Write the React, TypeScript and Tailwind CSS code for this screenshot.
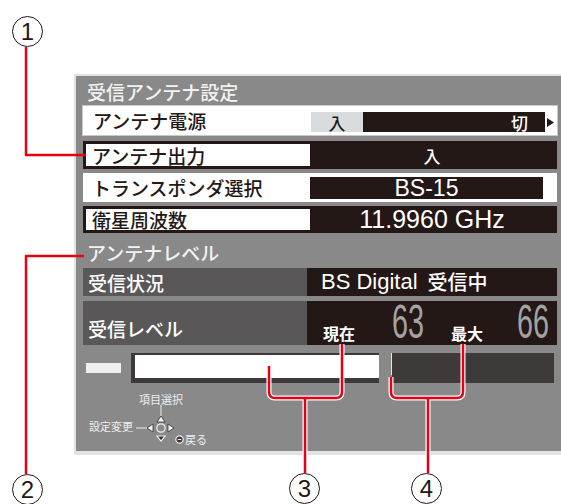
const jp = "font-['Noto_Sans_CJK_JP',sans-serif]";
const latin = "font-['Liberation_Sans','Noto_Sans_CJK_JP',sans-serif]";

function Callout({ n, className }: { n: string; className: string }) {
  return (
    <div
      className={`absolute w-[31px] h-[31px] rounded-full border-[1.5px] border-[#231815] bg-white flex items-center justify-center text-[24px] leading-none text-[#231815] ${latin} ${className}`}
    >
      {n}
    </div>
  );
}

function Digits({ v }: { v: string }) {
  return (
    <div className={`w-[33px] h-[47px] text-[48px] leading-[47px] text-[#a3a3a3] ${latin}`}>
      <div className="origin-left scale-x-[0.6] whitespace-nowrap">{v}</div>
    </div>
  );
}

function DPad() {
  return (
    <svg width="40" height="40" viewBox="0 0 40 40">
      <line x1="25" y1="0" x2="25" y2="11" stroke="#eee" strokeWidth="1" />
      <line x1="0" y1="23" x2="11" y2="23" stroke="#eee" strokeWidth="1" />
      <polygon points="21,17 29,17 25,11" fill="#f2f2f2" stroke="#333" strokeWidth="0.8" />
      <polygon points="11,23 17,19 17,27" fill="#f2f2f2" stroke="#333" strokeWidth="0.8" />
      <polygon points="32,19 32,27 38,23" fill="#f2f2f2" stroke="#333" strokeWidth="0.8" />
      <polygon points="21,31 29,31 25,36" fill="#333" stroke="#f2f2f2" strokeWidth="1.2" />
      <circle cx="25" cy="23" r="4.2" fill="#8a8a8a" stroke="#f2f2f2" strokeWidth="1.2" />
    </svg>
  );
}

export default function App() {
  return (
    <div className={`relative w-[561px] h-[504px] overflow-hidden bg-white ${jp}`}>
      {/* panel */}
      <div className="mt-[74px] ml-[74px] w-[490px] border-2 border-b-4 border-[#e3e3e3] bg-[#898989] pl-[7px]">
        <div className="h-[30px] flex items-center pl-[4px] text-[19px] font-medium leading-none text-[#f2f2f2]">
          受信アンテナ設定
        </div>

        {/* antenna power */}
        <div className="w-[474px] h-[29px] bg-white flex outline outline-1 outline-[#c9c9c9]">
          <div className="w-[228px] pl-[10px] flex items-center text-[19px] font-medium leading-none text-[#231815]">
            アンテナ電源
          </div>
          <div className="flex-1 flex items-end pb-[3px]">
            <div className="w-[52px] h-[20px] bg-[#d9dcdc] flex items-center justify-center text-[17px] font-medium leading-none text-[#231815]">
              入
            </div>
            <div className="w-[182px] h-[20px] bg-[#231815] flex items-center justify-end pr-[17px] text-[17px] font-medium leading-none text-white">
              切
            </div>
            <div className="flex-1 h-[20px] flex items-center pl-[2px]">
              <svg width="7" height="9" viewBox="0 0 7 9">
                <polygon points="0,0 7,4.5 0,9" fill="#231815" />
              </svg>
            </div>
          </div>
        </div>

        {/* antenna output */}
        <div className="mt-[6px] w-[474px] h-[28px] bg-[#231815] p-[3px] flex">
          <div className="w-[224px] bg-white pl-[6px] flex items-center text-[19px] font-medium leading-none text-[#231815]">
            アンテナ出力
          </div>
          <div className="flex-1 flex items-center justify-center text-[17px] font-medium leading-none text-white">入</div>
        </div>

        {/* transponder */}
        <div className="mt-[4px] w-[474px] h-[29px] bg-white flex">
          <div className="w-[227px] pl-[9px] flex items-center text-[19px] font-medium leading-none text-[#231815]">
            トランスポンダ選択
          </div>
          <div
            className={`mt-[4px] mb-[3px] w-[233px] bg-[#231815] flex items-center justify-center text-[23px] leading-none text-white ${latin}`}
          >
            BS-15
          </div>
        </div>

        {/* frequency */}
        <div className="mt-[4px] w-[474px] h-[27px] bg-[#231815] p-[3px] flex">
          <div className="w-[224px] bg-white pl-[6px] flex items-center text-[19px] font-medium leading-none text-[#231815]">
            衛星周波数
          </div>
          <div className={`flex-1 flex items-center justify-center text-[25px] leading-none text-white ${latin}`}>
            11.9960 GHz
          </div>
        </div>

        <div className="h-[35px] flex items-center pt-[4px] pl-[4px] text-[19px] font-medium leading-none text-[#f2f2f2]">
          アンテナレベル
        </div>

        {/* reception status */}
        <div className="w-[474px] h-[28px] flex">
          <div className="w-[224px] bg-[#595757] pl-[5px] flex items-center text-[19px] font-medium leading-none text-white">
            受信状況
          </div>
          <div className={`flex-1 bg-[#231815] pl-[14px] flex items-center text-[22px] leading-none text-white ${latin}`}>
            BS Digital <span className={`ml-[10px] text-[20px] font-medium ${jp}`}>受信中</span>
          </div>
        </div>

        {/* reception level */}
        <div className="mt-[5px] w-[474px] h-[44px] flex">
          <div className="w-[224px] bg-[#595757] pl-[5px] pb-[7px] flex items-end text-[19px] font-medium leading-none text-white">
            受信レベル
          </div>
          <div className="flex-1 bg-[#231815] flex items-end pl-[16px]">
            <span className="mb-[4px] text-[16px] font-bold leading-none text-white">現在</span>
            <div className="ml-[37px]">
              <Digits v="63" />
            </div>
            <span className="ml-[26px] mb-[4px] text-[16px] font-bold leading-none text-white">最大</span>
            <div className="ml-[34px]">
              <Digits v="66" />
            </div>
          </div>
        </div>

        {/* level bar */}
        <div className="mt-[8px] w-[474px] h-[30px] flex items-center">
          <div className="ml-[3px] w-[35px] h-[10px] bg-[#eeefef]" />
          <div className="ml-[10px] w-[248px] h-full bg-[#3e3a39] pl-[4px] pt-[2px] pb-[5px]">
            <div className="w-full h-full bg-white" />
          </div>
          <div className="ml-[12px] w-[1px] h-[22px] self-start bg-[#e5e5e5]" />
          <div className="w-[162px] h-full bg-[#3e3a39]" />
        </div>

        {/* key guide */}
        <div className="h-[68px] flex items-start pl-[6px] text-[11px] leading-none text-[#eeeeee]">
          <span className="mt-[38px]">設定変更</span>
          <div className="ml-[3px] flex flex-col">
            <span className="mt-[11px] ml-[3px]">項目選択</span>
            <DPad />
          </div>
          <div className="ml-[-8px] mt-[51px] flex items-center gap-[1px]">
            <svg width="9" height="9" viewBox="0 0 9 9">
              <circle cx="4.5" cy="4.5" r="3.7" fill="#3e3a39" stroke="#f2f2f2" strokeWidth="1.2" />
              <path d="M2.8 4.5 H6.2" stroke="#f2f2f2" strokeWidth="1" />
            </svg>
            <span>戻る</span>
          </div>
        </div>
      </div>

      {/* callout lines */}
      <svg className="absolute inset-0 pointer-events-none" width="561" height="504" viewBox="0 0 561 504" fill="none">
        <g stroke="#ffffff" strokeWidth="5" strokeLinejoin="round">
          <path d="M269 366 V392 Q269 398 275 398 H336 Q342 398 342 392 V344 M305 398 V473" />
          <path d="M391 377 V392 Q391 398 397 398 H457 Q463 398 463 392 V344 M428 398 V473" />
        </g>
        <g stroke="#e60012" strokeWidth="2.5" strokeLinejoin="round">
          <path d="M26 47 V155 H86" />
          <path d="M26 474 V256 H84" />
          <path d="M269 366 V392 Q269 398 275 398 H336 Q342 398 342 392 V344 M305 398 V473" />
          <path d="M391 377 V392 Q391 398 397 398 H457 Q463 398 463 392 V344 M428 398 V473" />
        </g>
      </svg>

      <Callout n="1" className="left-[12px] top-[16px]" />
      <Callout n="2" className="left-[12px] top-[474px]" />
      <Callout n="3" className="left-[289px] top-[473px]" />
      <Callout n="4" className="left-[411px] top-[473px]" />
    </div>
  );
}
